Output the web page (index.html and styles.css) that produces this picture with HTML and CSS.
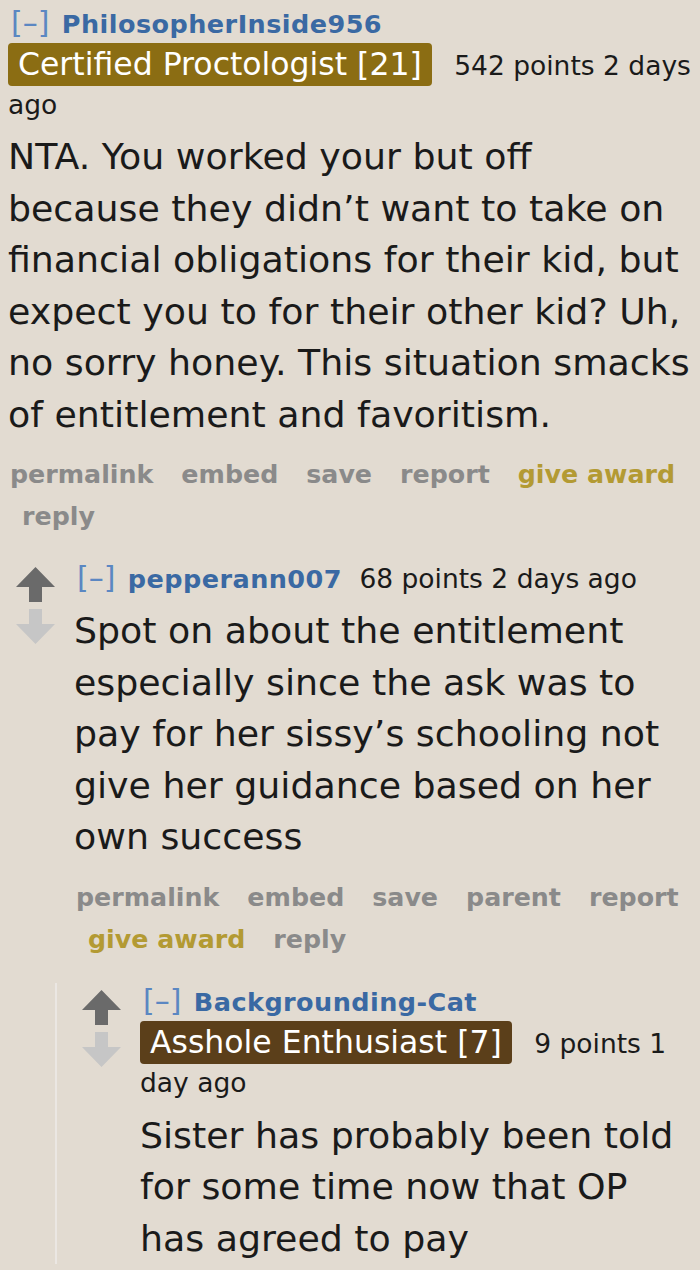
FILE: index.html
```html
<!DOCTYPE html>
<html lang="en">
<head>
<meta charset="utf-8">
<title>Comments</title>
<link rel="stylesheet" href="styles.css">
</head>
<body>
<div class="page">
  <div class="comment top">
    <div class="entry">
      <p class="tagline"><span class="expand">[–]</span> <a class="author">PhilosopherInside956</a> <span class="flair gold">Certified Proctologist [21]</span> <span class="score">542 points</span> <time>2 days ago</time></p>
      <div class="md">NTA. You worked your but off<br>because they didn’t want to take on<br>financial obligations for their kid, but<br>expect you to for their other kid? Uh,<br>no sorry honey. This situation smacks<br>of entitlement and favoritism.</div>
      <ul class="buttons">
        <li>permalink</li>
        <li>embed</li>
        <li>save</li>
        <li>report</li>
        <li class="award">give award</li>
        <li>reply</li>
      </ul>
    </div>
    <div class="child first-child">
      <div class="comment">
        <div class="midcol">
          <svg class="arrow up" viewBox="0 0 39 35"><path d="M19.5 0 L39 20 L26 20 L26 35 L13 35 L13 20 L0 20 Z"/></svg>
          <svg class="arrow down" viewBox="0 0 39 35"><path d="M13 0 L26 0 L26 15 L39 15 L19.5 35 L0 15 L13 15 Z"/></svg>
        </div>
        <div class="entry">
          <p class="tagline"><span class="expand">[–]</span> <a class="author">pepperann007</a> <span class="score">68 points</span> <time>2 days ago</time></p>
          <div class="md">Spot on about the entitlement especially since the ask was to pay for her sissy’s schooling not give her guidance based on her own success</div>
          <ul class="buttons">
            <li>permalink</li>
            <li>embed</li>
            <li>save</li>
            <li>parent</li>
            <li>report</li>
            <li class="award">give award</li>
            <li>reply</li>
          </ul>
          <div class="child nested">
            <div class="comment">
              <div class="midcol">
                <svg class="arrow up" viewBox="0 0 39 35"><path d="M19.5 0 L39 20 L26 20 L26 35 L13 35 L13 20 L0 20 Z"/></svg>
                <svg class="arrow down" viewBox="0 0 39 35"><path d="M13 0 L26 0 L26 15 L39 15 L19.5 35 L0 15 L13 15 Z"/></svg>
              </div>
              <div class="entry">
                <p class="tagline"><span class="expand">[–]</span> <a class="author">Backgrounding-Cat</a> <span class="flair brown">Asshole Enthusiast [7]</span> <span class="score">9 points</span> <time>1 day ago</time></p>
                <div class="md">Sister has probably been told for some time now that OP has agreed to pay</div>
              </div>
            </div>
          </div>
        </div>
      </div>
    </div>
  </div>
</div>
</body>
</html>
```

FILE: styles.css
```css
html, body {
  margin: 0;
  padding: 0;
  background: #e2dbd1;
}

body {
  font-family: "DejaVu Sans", Verdana, sans-serif;
  color: #1a1a1a;
}

.page {
  padding: 5px 0 0 8px;
  height: 1270px;
  overflow: hidden;
  box-sizing: border-box;
}

.comment {
  display: flex;
}

.comment.top {
  display: block;
}

.entry {
  flex: 1;
  min-width: 0;
}

.tagline {
  margin: 0;
  font-size: 26.5px;
  line-height: 38px;
}

.expand {
  color: #5b87c2;
  font-size: 30px;
  line-height: 1;
  margin-left: 3px;
}

.author {
  color: #3a69a3;
  font-weight: bold;
  font-size: 25.5px;
  letter-spacing: 0.45px;
  margin-left: 4px;
  margin-right: 9px;
}

.flair {
  display: inline-block;
  color: #fff;
  font-size: 31.5px;
  line-height: 43px;
  padding: 0 10px;
  border-radius: 4px;
  margin-right: 14px;
}

.flair.gold {
  background: #8b6d13;
}

.flair.brown {
  background: #5b3f1a;
}

.score,
time {
  color: #1a1a1a;
}

.md {
  font-size: 36.3px;
  line-height: 51.5px;
  margin: 7px 0 0;
}

.buttons {
  list-style: none;
  margin: 14px 0 0;
  padding: 0;
  display: flex;
  flex-wrap: wrap;
  font-weight: bold;
  font-size: 25.3px;
  line-height: 42px;
  color: #8a8a8a;
}

.buttons li {
  padding-left: 14px;
  margin-right: 14px;
}

.buttons li:first-child {
  padding-left: 2px;
}

.buttons .award {
  color: #b39a33;
}

.first-child {
  margin-top: 22px;
  padding-left: 8px;
}

.midcol {
  width: 58px;
  flex: none;
  display: flex;
  flex-direction: column;
  gap: 7px;
  padding-top: 7px;
}

.arrow {
  width: 39px;
  height: 35px;
  display: block;
}

.arrow.up {
  fill: #6a6a6a;
}

.arrow.down {
  fill: #c6c6c6;
}

.nested {
  margin-top: 22px;
  margin-left: -19px;
  padding-left: 25px;
  border-left: 2px solid #ebe7e3;
}

.nested .md {
  margin-top: 8px;
}
```
